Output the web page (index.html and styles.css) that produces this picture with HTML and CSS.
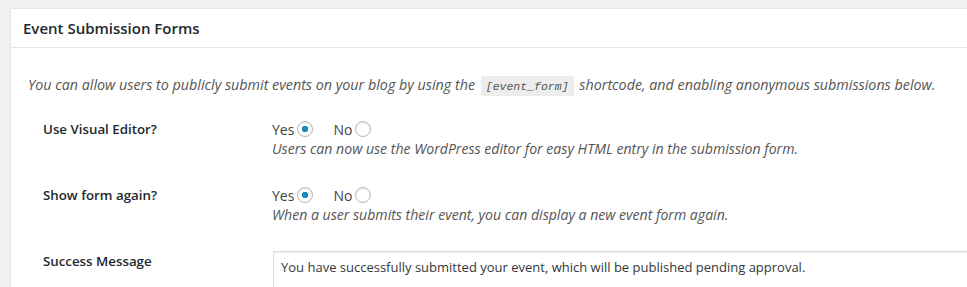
FILE: index.html
```html
<!DOCTYPE html>
<html lang="en">

<head>
    <meta charset="UTF-8">
    <title>Event Submission Forms</title>
    <link rel="stylesheet" href="styles.css">
</head>

<body>

    <div class="postbox">
        <h2 class="hndle">Event Submission Forms</h2>

        <div class="inside">
            <p class="intro">You can allow users to publicly submit events on your blog by using the
                <code>[event_form]</code> shortcode, and enabling anonymous submissions below.</p>

            <!-- Settings rows -->
            <div class="form-row">
                <div class="row-label">Use Visual Editor?</div>
                <div class="row-field">
                    <div class="choices">
                        <label>Yes <input type="radio" name="visual_editor" checked></label>
                        <label>No <input type="radio" name="visual_editor"></label>
                    </div>
                    <p class="description">Users can now use the WordPress editor for easy HTML entry in the submission form.</p>
                </div>
            </div>

            <div class="form-row">
                <div class="row-label">Show form again?</div>
                <div class="row-field">
                    <div class="choices">
                        <label>Yes <input type="radio" name="form_again" checked></label>
                        <label>No <input type="radio" name="form_again"></label>
                    </div>
                    <p class="description">When a user submits their event, you can display a new event form again.</p>
                </div>
            </div>

            <div class="form-row">
                <div class="row-label">Success Message</div>
                <div class="row-field">
                    <textarea rows="4">You have successfully submitted your event, which will be published pending approval.</textarea>
                </div>
            </div>
        </div>
    </div>

</body>

</html>
```

FILE: styles.css
```css
body {
    margin: 0;
    padding: 8px 0 0 10px;
    background-color: #f1f1f1;
    overflow: hidden;
    font-family: 'Open Sans', sans-serif;
    font-size: 13px;
    color: #444;
}

.postbox {
    width: 1000px;
    height: 300px;
    background-color: #fff;
    border: 1px solid #e5e5e5;
    box-shadow: 0 1px 1px rgba(0, 0, 0, 0.04);
}

.hndle {
    margin: 0;
    padding: 0 12px;
    height: 38px;
    line-height: 38px;
    font-size: 15px;
    font-weight: 600;
    color: #23282d;
    border-bottom: 1px solid #e5e5e5;
}

.inside {
    padding: 27px 12px 0;
}

.intro {
    margin: 0 0 22px;
    padding-left: 5px;
    line-height: 20px;
    font-size: 14.3px;
    font-style: italic;
    color: #555;
}

code {
    font-family: 'Liberation Mono', monospace;
    font-style: italic;
    font-size: 11.5px;
    padding: 4px 5px 3px;
    margin: 0 2px;
    background-color: rgba(0, 0, 0, 0.07);
}

.form-row {
    display: grid;
    grid-template-columns: 229px 1fr;
    padding-left: 20px;
    margin-bottom: 27px;
}

.row-label {
    font-size: 13.3px;
    font-weight: 600;
    line-height: 20px;
    color: #23282d;
}

.choices {
    display: flex;
    gap: 20px;
    height: 20px;
    align-items: center;
    font-size: 14px;
}

.choices label {
    display: flex;
    align-items: center;
    gap: 3px;
}

input[type="radio"] {
    appearance: none;
    margin: 0;
    width: 16px;
    height: 16px;
    border: 1px solid #b4b9be;
    border-radius: 50%;
    background-color: #fff;
    box-shadow: inset 0 1px 2px rgba(0, 0, 0, 0.1);
}

input[type="radio"]:checked {
    background-image: radial-gradient(circle, #1e8cbe 3px, transparent 3.5px);
}

.description {
    margin: 0;
    line-height: 19px;
    font-size: 14.1px;
    font-style: italic;
    color: #555;
}

textarea {
    display: block;
    width: 700px;
    height: 80px;
    margin: 0 0 0 1px;
    padding: 6px 7px;
    border: 1px solid #ddd;
    box-shadow: inset 0 1px 2px rgba(0, 0, 0, 0.07);
    font-family: 'Open Sans', sans-serif;
    font-size: 13px;
    line-height: 18px;
    color: #32373c;
    resize: none;
}
```
